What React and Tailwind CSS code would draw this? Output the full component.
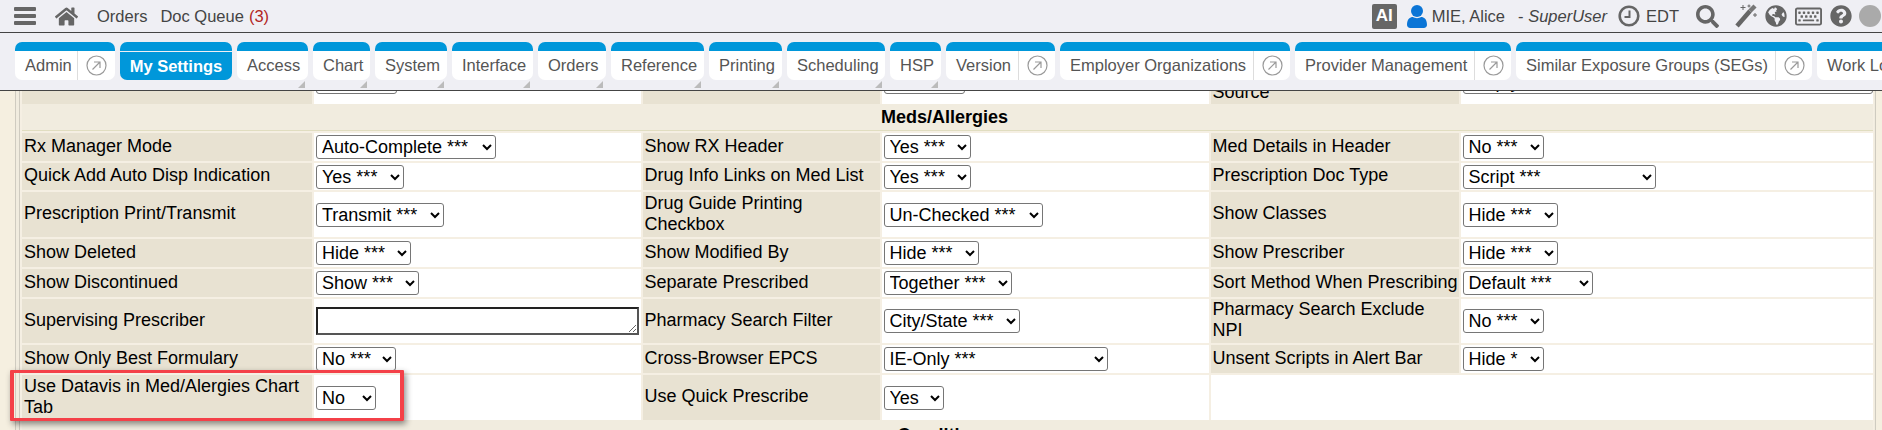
import React from "react";
import { FaHome, FaSearch, FaGlobeAmericas, FaRegKeyboard, FaQuestionCircle } from "react-icons/fa";

function Arrow() {
  return (
    <svg width="21" height="21" viewBox="0 0 21 21" fill="none" stroke="#9a9a9a" strokeWidth="1.2">
      <circle cx="10.5" cy="10.5" r="9.5" />
      <path d="M6.5 14.5 L14 7 M8 7 H14 V13" />
    </svg>
  );
}

function Tab({ label, width, split, menu, active }) {
  if (active) {
    return (
      <div className="shrink-0" style={{ width }}>
        <div className="h-[9px] rounded-t-[7px] bg-[#0097da]" />
        <div className="mt-px flex h-[28px] items-center justify-center rounded-b-[7px] bg-[#0097da] font-bold text-white">{label}</div>
      </div>
    );
  }
  return (
    <div className="relative shrink-0" style={{ width }}>
      <div className="h-[9px] rounded-t-[7px] bg-[#0097da]" />
      <div className="flex h-[29px] items-stretch rounded-b-[7px] bg-white text-[#555]">
        <div className={split ? "flex items-center border-r border-[#ddd] pl-[10px]" : "flex items-center pl-[10px]"} style={split ? { width: split } : undefined}>
          <span className="whitespace-nowrap">{label}</span>
        </div>
        {split ? (
          <div className="flex flex-1 items-center justify-center">
            <Arrow />
          </div>
        ) : null}
      </div>
      {menu ? <div className="absolute bottom-[2px] right-[3px] h-[7px] w-[7px] bg-[#bbb] [clip-path:polygon(100%_0,100%_100%,0_100%)]" /> : null}
    </div>
  );
}

function Sel({ text, w, clipped }) {
  return (
    <select
      className={`h-6 rounded-[3px] border border-[#767676] bg-white pl-[1px] text-[18px] text-black ${clipped ? "-mt-[21px]" : ""}`}
      style={{ width: w }}
      defaultValue={text}
    >
      <option>{text}</option>
    </select>
  );
}

function Label({ children }) {
  return <div className="flex items-center whitespace-nowrap bg-[#e8e2d2] px-[2px] pb-[2px] leading-[21px] text-black">{children}</div>;
}

function Value({ children, h }) {
  return (
    <div className="flex items-center bg-white pl-[2px]" style={{ height: h }}>
      {children}
    </div>
  );
}

function ClippedValue({ text, w }) {
  return (
    <div className="flex h-[13px] items-start overflow-hidden bg-white pl-[2px]">
      <Sel text={text} w={w} clipped />
    </div>
  );
}

const rows = [
  { h: 28, cells: [["Rx Manager Mode", "Auto-Complete ***", 180], ["Show RX Header", "Yes ***", 87], ["Med Details in Header", "No ***", 81]] },
  { h: 27, cells: [["Quick Add Auto Disp Indication", "Yes ***", 88], ["Drug Info Links on Med List", "Yes ***", 87], ["Prescription Doc Type", "Script ***", 193]] },
  { h: 45, cells: [["Prescription Print/Transmit", "Transmit ***", 128], [<>Drug Guide Printing<br />Checkbox</>, "Un-Checked ***", 159], ["Show Classes", "Hide ***", 95]] },
  { h: 28, cells: [["Show Deleted", "Hide ***", 95], ["Show Modified By", "Hide ***", 95], ["Show Prescriber", "Hide ***", 95]] },
  { h: 28, cells: [["Show Discontinued", "Show ***", 103], ["Separate Prescribed", "Together ***", 128], ["Sort Method When Prescribing", "Default ***", 130]] },
  { h: 44, cells: [["Supervising Prescriber", null, 0], ["Pharmacy Search Filter", "City/State ***", 136], [<>Pharmacy Search Exclude<br />NPI</>, "No ***", 81]] },
  { h: 28, cells: [["Show Only Best Formulary", "No ***", 80], ["Cross-Browser EPCS", "IE-Only ***", 224], ["Unsent Scripts in Alert Bar", "Hide *", 81]] },
];

export default function App() {
  return (
    <div className="h-[430px] w-[1882px] overflow-hidden bg-[#f5efe0] font-['Liberation_Sans',Arial,sans-serif] text-[18px]">
      {/* top bar */}
      <div className="flex h-[33px] items-center border-b border-[#444] bg-[#efeff4] text-[16.5px] text-[#444]">
        <div className="ml-[14px] flex h-[18px] w-[22px] flex-col justify-between">
          <div className="h-1 rounded-[1px] bg-[#666]" />
          <div className="h-1 rounded-[1px] bg-[#666]" />
          <div className="h-1 rounded-[1px] bg-[#666]" />
        </div>
        <FaHome className="ml-[19px] text-[#666]" size={23} />
        <span className="ml-[19px]">Orders</span>
        <span className="ml-[13px]">Doc Queue</span>
        <span className="ml-[5px] text-[#b3261e]">(3)</span>
        <div className="ml-auto flex items-center">
          <div className="flex h-[25px] w-[25px] items-center justify-center rounded-[2px] bg-[#666] text-[17px] font-bold text-white">AI</div>
          <svg className="ml-[10px]" width="20" height="23" viewBox="0 0 20 23" fill="#0b75d6">
            <ellipse cx="10" cy="6" rx="6" ry="6" />
            <path d="M0 20 C0 14 3 12 6 12 C8 13.5 12 13.5 14 12 C17 12 20 14 20 20 C20 22 18 23 17 23 H3 C2 23 0 22 0 20 Z" />
          </svg>
          <span className="ml-[5px] whitespace-nowrap">MIE, Alice</span>
          <span className="ml-[13px] whitespace-nowrap">
            - <i>SuperUser</i>
          </span>
          <svg className="ml-[11px]" width="22" height="22" viewBox="0 0 22 22" fill="none" stroke="#666">
            <circle cx="11" cy="11" r="9.3" strokeWidth="2.6" />
            <path d="M11.5 5.5 V12 H6.5" strokeWidth="2" />
          </svg>
          <span className="ml-[6px]">EDT</span>
          <FaSearch className="ml-[17px] text-[#666]" size={23} />
          <svg className="ml-[16px]" width="23" height="24" viewBox="0 0 23 24">
            <path d="M2 22 L15 7" stroke="#666" strokeWidth="4.5" />
            <path d="M15 7 L20 2" stroke="#777" strokeWidth="4.5" />
            <path d="M8 1 v5 M5.5 3.5 h5 M14 0.5 v3 M12.5 2 h3 M20 9 v4 M18 11 h4" stroke="#666" strokeWidth="1" />
          </svg>
          <FaGlobeAmericas className="ml-[7px] text-[#666]" size={22} />
          <FaRegKeyboard className="ml-[8px] text-[#666]" size={27} />
          <FaQuestionCircle className="ml-[8px] text-[#666]" size={22} />
          <div className="ml-[7px] mr-px h-[22px] w-[22px] rounded-full bg-[#aaa]" />
        </div>
      </div>

      {/* tabs */}
      <div className="flex h-[58px] gap-[5px] overflow-hidden border-b border-[#444] bg-[#efeff4] pl-[15px] pt-[9px] text-[16.5px]">
        <Tab label="Admin" width={100} split={63} />
        <Tab label="My Settings" width={112} active />
        <Tab label="Access" width={71} menu />
        <Tab label="Chart" width={57} menu />
        <Tab label="System" width={72} menu />
        <Tab label="Interface" width={81} menu />
        <Tab label="Orders" width={68} menu />
        <Tab label="Reference" width={93} menu />
        <Tab label="Printing" width={73} menu />
        <Tab label="Scheduling" width={98} menu />
        <Tab label="HSP" width={51} menu />
        <Tab label="Version" width={109} split={73} />
        <Tab label="Employer Organizations" width={230} split={194} />
        <Tab label="Provider Management" width={216} split={180} />
        <Tab label="Similar Exposure Groups (SEGs)" width={296} split={260} />
        <Tab label="Work Log" width={100} split={90} />
      </div>

      {/* content */}
      <div className="relative pl-[15px]">
        <div className="w-[1861px] border-x border-[#cfcbc0] bg-[#f1ecdf] pl-[3px] pr-[1px]">
          <div className="border-l border-[#cfcbc0] bg-[#f5efe3] pl-[2px]">
            <div className="grid w-[1851px] grid-cols-[290px_326.5px_237px_327px_248px_412.5px] gap-[2px]">
              {/* row scrolled under the bars */}
              <div className="h-[13px] bg-[#e8e2d2]" />
              <ClippedValue text=" " w={81} />
              <div className="h-[13px] bg-[#e8e2d2]" />
              <ClippedValue text=" " w={81} />
              <div className="flex h-[13px] items-end overflow-hidden bg-[#e8e2d2] px-[2px] pb-[1px] leading-[21px] text-black">Source</div>
              <ClippedValue text="Empty" w={410} />

              <div className="col-span-6 -mt-[2px] flex h-[27px] items-center justify-center border-b border-[#e0ddc0] bg-[#f1ecdf] pr-[6px] font-bold text-black">Meds/Allergies</div>

              {rows.map((r, i) => (
                <React.Fragment key={i}>
                  {r.cells.map((c, j) => (
                    <React.Fragment key={j}>
                      <Label>
                        <span>{c[0]}</span>
                      </Label>
                      <Value h={r.h}>
                        {c[1] ? (
                          <Sel text={c[1]} w={c[2]} />
                        ) : (
                          <textarea className="h-[28px] w-[323px] border-2 border-[#222] border-b-[#555] border-r-[#555] bg-white" />
                        )}
                      </Value>
                    </React.Fragment>
                  ))}
                </React.Fragment>
              ))}

              <Label>
                <span>
                  Use Datavis in Med/Alergies Chart
                  <br />
                  Tab
                </span>
              </Label>
              <Value h={45}>
                <Sel text="No" w={60} />
              </Value>
              <Label>Use Quick Prescribe</Label>
              <Value h={45}>
                <Sel text="Yes" w={60} />
              </Value>
              <div className="col-span-2 bg-white" />

              <div className="col-span-6 -mt-[2px] flex h-[27px] items-start justify-center bg-[#f1ecdf] pr-[6px] pt-[2px] font-bold text-black">Conditions</div>
            </div>
          </div>
        </div>

        {/* highlight annotation */}
        <div className="absolute left-[10px] top-[279px] h-[51px] w-[394px] rounded-[1px] border-x-[4px] border-y-[3px] border-[#f44048] shadow-[2px_3px_6px_rgba(0,0,0,0.45)]" />
      </div>
    </div>
  );
}
